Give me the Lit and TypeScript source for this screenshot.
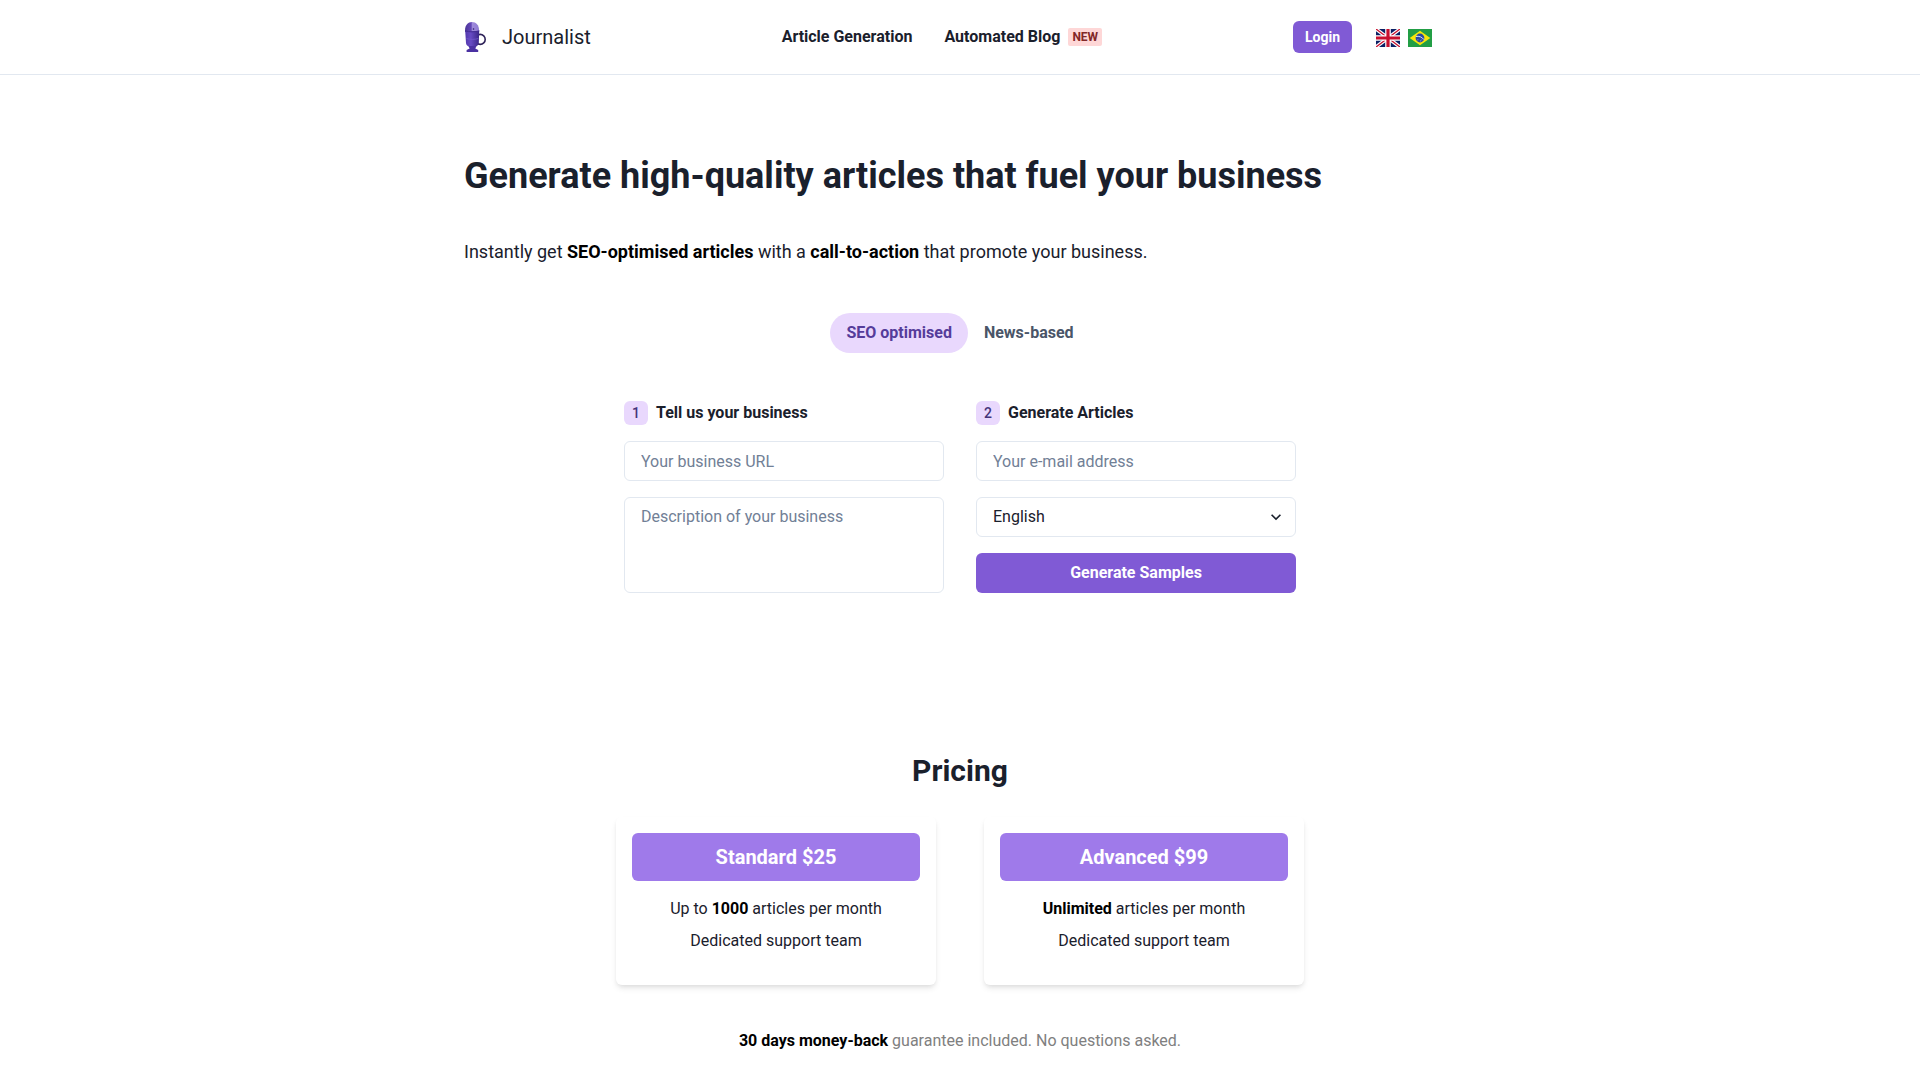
import { LitElement, html, css } from "lit";
import { customElement, property, state } from "lit/decorators.js";

const logo = html`<svg class="logo" viewBox="0 0 24 32" aria-hidden="true">
  <defs>
    <linearGradient id="cup" x1="0" y1="0" x2="1" y2="0">
      <stop offset="0" stop-color="#5238ac" />
      <stop offset="0.4" stop-color="#674bc4" />
      <stop offset="1" stop-color="#3a2687" />
    </linearGradient>
    <linearGradient id="dome" x1="0" y1="0" x2="1" y2="0">
      <stop offset="0" stop-color="#4c3499" />
      <stop offset="0.45" stop-color="#6448b8" />
      <stop offset="0.5" stop-color="#a08cdc" />
      <stop offset="1" stop-color="#8f7bd2" />
    </linearGradient>
  </defs>
  <circle cx="16.2" cy="18.4" r="5" fill="none" stroke="#2e2258" stroke-width="1.6" />
  <path d="M1 9.500C1 4 4 1 8 1s7 3 7 8v2H1z" fill="url(#dome)" />
  <path d="M1.200 10h14l-.4 12c-.2 2-1.400 3-3 3.500H5C3.300 25 2.100 24 2 22z" fill="url(#cup)" />
  <path d="M1 9.800c4 1.400 10 1.400 14.400 0" fill="none" stroke="#432d92" stroke-width="1" />
  <path d="M2.500 17.500c3.500 1.200 8 1.200 11.800 0" fill="none" stroke="#7259cc" stroke-width=".8" />
  <path d="M4.500 25h8l-1.200 2.500 2.900 1.500v2H2.600v-2l3-1.500z" fill="#4a31a2" />
  <circle cx="9.500" cy="8" r=".8" fill="#2d1b69" />
</svg>`;

const ukFlag = html`<svg class="flag" viewBox="0 0 24 18" aria-hidden="true">
  <rect width="24" height="18" fill="#0a1f64" />
  <path d="M0 0l24 18M24 0L0 18" stroke="#fff" stroke-width="3.600" />
  <path d="M0 0l12 9M24 18L12 9M24 0L12 9M0 18l12-9" stroke="#c8102e" stroke-width="1.300" />
  <path d="M12 0v18M0 9h24" stroke="#fff" stroke-width="5.600" />
  <path d="M12 0v18M0 9h24" stroke="#c8102e" stroke-width="3.200" />
</svg>`;

const brFlag = html`<svg class="flag" viewBox="0 0 24 18" aria-hidden="true">
  <rect width="24" height="18" fill="#229e45" />
  <path d="M12 1.700L22.300 9 12 16.300 1.700 9z" fill="#f8e509" />
  <circle cx="12" cy="9" r="4.400" fill="#2b49a3" />
  <path d="M8 7.500c3-.6 6 .4 8 3.200" fill="none" stroke="#e8f1f4" stroke-width=".9" />
  <path d="M9.500 10.800h.8M12 11.900h.8M13.500 10.900h.6" stroke="#fff" stroke-width=".6" />
</svg>`;

@customElement("site-header")
class SiteHeader extends LitElement {
  static styles = css`
    :host { display: block; border-bottom: 1px solid #e2e8f0; }
    * { box-sizing: border-box; }
    a { color: inherit; text-decoration: none; }
    .bar {
      display: flex; align-items: center; justify-content: space-between;
      max-width: 1024px; min-height: 74px; margin: 0 auto; padding: 0 40px 0 16px;
    }
    .brand { display: flex; align-items: center; gap: 14px; font-size: 20px; line-height: 30px; }
    .logo { width: 24px; height: 32px; }
    .nav { display: flex; align-items: center; gap: 32px; font-weight: 700; }
    .link { display: flex; align-items: center; gap: 8px; }
    .tag {
      padding: 0 4px; border-radius: 2px; background: #fed7d7; color: #822727;
      font-size: 12px; line-height: 18px;
    }
    .actions { display: flex; align-items: center; gap: 24px; }
    .login {
      height: 32px; padding: 0 12px; border: 0; border-radius: 6px; background: #805ad5;
      color: #fff; font: 700 14px/16px Roboto, sans-serif; cursor: pointer;
    }
    .flags { display: flex; gap: 8px; padding-top: 2px; }
    .flag { display: block; width: 24px; height: 18px; }
  `;
  render() {
    return html`<header class="bar">
      <a class="brand" href="#">${logo}<span>Journalist</span></a>
      <nav class="nav">
        <a class="link" href="#articles">Article Generation</a>
        <a class="link" href="#blog">Automated Blog <span class="tag">NEW</span></a>
      </nav>
      <div class="actions">
        <button class="login" type="button">Login</button>
        <div class="flags">
          <a href="#en" aria-label="English">${ukFlag}</a>
          <a href="#pt" aria-label="Português">${brFlag}</a>
        </div>
      </div>
    </header>`;
  }
}

@customElement("sample-form")
class SampleForm extends LitElement {
  static styles = css`
    :host { display: block; }
    * { box-sizing: border-box; }
    .form {
      display: grid; grid-template-columns: 1fr 1fr; gap: 32px;
      max-width: 672px; margin: 0 auto;
    }
    .column { display: flex; flex-direction: column; gap: 16px; min-width: 0; }
    .step { display: flex; align-items: center; gap: 8px; margin: 0; font-size: 16px; line-height: 24px; font-weight: 700; }
    .number {
      width: 24px; border-radius: 6px; background: #e9d8fd; color: #44337a;
      font-size: 14px; font-weight: 500; line-height: 24px; text-align: center;
    }
    .field {
      display: block; width: 100%; height: 40px; margin: 0; padding: 0 16px;
      border: 1px solid #e2e8f0; border-radius: 6px; background: #fff; color: #1a202c;
      font: 400 16px/24px Roboto, sans-serif; appearance: none; outline-color: #805ad5;
    }
    .field::placeholder { color: #718096; opacity: 1; }
    .area { height: 96px; padding-top: 7px; resize: none; }
    .picker { display: grid; align-items: center; }
    .picker > * { grid-area: 1 / 1; }
    .chevron { justify-self: end; width: 20px; height: 20px; margin-right: 10px; pointer-events: none; }
    .submit {
      height: 40px; border: 0; border-radius: 6px; background: #805ad5; color: #fff;
      font: 700 16px/20px Roboto, sans-serif; cursor: pointer;
    }
  `;
  render() {
    return html`<form class="form" @submit=${(e: Event) => e.preventDefault()}>
      <div class="column">
        <h2 class="step"><span class="number">1</span>Tell us your business</h2>
        <input class="field" type="url" aria-label="Your business URL" placeholder="Your business URL" />
        <textarea class="field area" aria-label="Description of your business" placeholder="Description of your business"></textarea>
      </div>
      <div class="column">
        <h2 class="step"><span class="number">2</span>Generate Articles</h2>
        <input class="field" type="email" aria-label="Your e-mail address" placeholder="Your e-mail address" />
        <div class="picker">
          <select class="field" aria-label="Language"><option>English</option></select>
          <svg class="chevron" viewBox="0 0 24 24" aria-hidden="true">
            <path fill="#1a202c" d="M16.59 8.59L12 13.17 7.41 8.59 6 10l6 6 6-6z" />
          </svg>
        </div>
        <button class="submit" type="submit">Generate Samples</button>
      </div>
    </form>`;
  }
}

@customElement("price-card")
class PriceCard extends LitElement {
  static styles = css`
    :host {
      display: block; padding: 16px 16px 32px; border-radius: 6px; text-align: center;
      box-shadow: 0 4px 6px -1px rgba(0, 0, 0, 0.1), 0 2px 4px -1px rgba(0, 0, 0, 0.06);
    }
    .title {
      margin: 0; border-radius: 6px; background: #9f7aea; color: #fff;
      font-size: 20px; font-weight: 700; line-height: 48px;
    }
    .features { display: flex; flex-direction: column; gap: 8px; padding-top: 16px; }
  `;
  @property() heading = "";
  render() {
    return html`<h3 class="title">${this.heading}</h3>
      <div class="features"><slot></slot></div>`;
  }
}

@customElement("app-root")
class AppRoot extends LitElement {
  static styles = css`
    :host {
      display: block; background: #fff; color: #1a202c;
      font-family: Roboto, sans-serif; font-size: 16px; line-height: 24px;
    }
    * { box-sizing: border-box; }
    strong { color: #000; font-weight: 700; }
    p, h1, h2 { margin: 0; }
    .page { max-width: 1024px; margin: 0 auto; padding: 77px 16px 24px; }
    .headline { font-size: 36px; line-height: 48px; font-weight: 700; }
    .lead { padding-top: 38px; font-size: 18px; line-height: 27px; }
    .tabs { display: flex; justify-content: center; padding: 48px 0; }
    .tab {
      height: 40px; padding: 0 16px; border: 0; border-radius: 20px; background: transparent;
      color: #4a5568; font: 700 16px/24px Roboto, sans-serif; cursor: pointer;
    }
    .tab[aria-selected="true"] { background: #e9d8fd; color: #553c9a; }
    .pricing { padding-top: 160px; text-align: center; }
    .title { font-size: 30px; line-height: 36px; font-weight: 700; }
    .cards {
      display: grid; grid-template-columns: 1fr 1fr; gap: 48px;
      max-width: 688px; margin: 0 auto; padding: 28px 0 44px;
    }
    .guarantee { color: #808080; }
  `;
  @state() private active = 0;
  render() {
    return html`<site-header></site-header>
      <main class="page">
        <h1 class="headline">Generate high-quality articles that fuel your business</h1>
        <p class="lead">Instantly get <strong>SEO-optimised articles</strong> with a <strong>call-to-action</strong> that promote your business.</p>
        <div class="tabs" role="tablist">
          ${["SEO optimised", "News-based"].map(
            (label, i) => html`<button class="tab" type="button" role="tab" aria-selected=${this.active === i ? "true" : "false"} @click=${() => (this.active = i)}>${label}</button>`
          )}
        </div>
        <sample-form></sample-form>
        <section class="pricing">
          <h2 class="title">Pricing</h2>
          <div class="cards">
            <price-card heading="Standard $25">
              <p>Up to <strong>1000</strong> articles per month</p>
              <p>Dedicated support team</p>
            </price-card>
            <price-card heading="Advanced $99">
              <p><strong>Unlimited</strong> articles per month</p>
              <p>Dedicated support team</p>
            </price-card>
          </div>
          <p class="guarantee"><strong>30 days money-back</strong> guarantee included. No questions asked.</p>
        </section>
      </main>`;
  }
}
